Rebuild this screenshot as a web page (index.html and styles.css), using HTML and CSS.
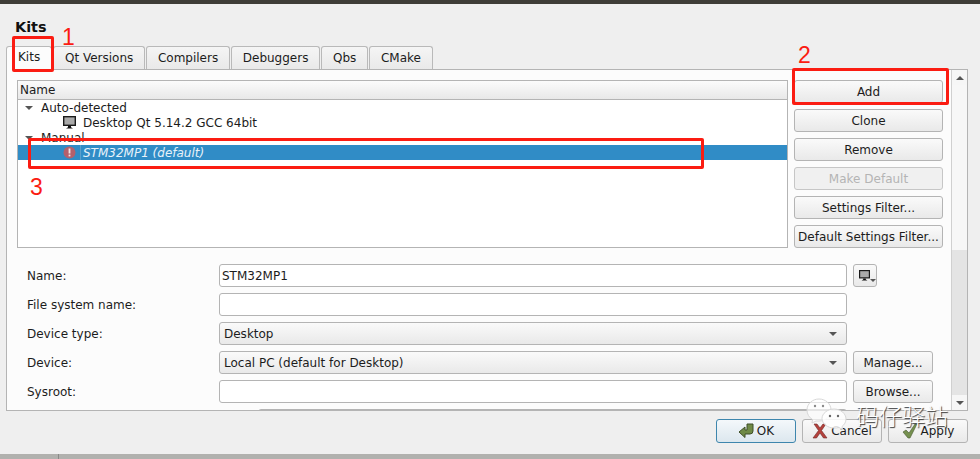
FILE: index.html
```html
<!DOCTYPE html>
<html lang="en">
  <head>
    <meta charset="UTF-8" />
    <title>Kits</title>
    <link rel="stylesheet" href="styles.css">
  </head>
  <body>
    <svg class="icon-defs" width="0" height="0">
      <symbol id="monitor" viewBox="0 0 13 13">
        <rect x="0.7" y="0.7" width="11.600" height="8.600" fill="#aaa" stroke="#1a1a1a" stroke-width="1.400"/>
        <path d="M5 10h3v1.200l2 1.300H3l2-1.300z" fill="#111"/>
      </symbol>
    </svg>
    <div class="topbar"></div>
    <div class="dialog">
      <h1>Kits</h1>
      <div class="tabs">
        <div class="tab active">Kits</div>
        <div class="tab">Qt Versions</div>
        <div class="tab">Compilers</div>
        <div class="tab">Debuggers</div>
        <div class="tab">Qbs</div>
        <div class="tab">CMake</div>
      </div>
      <div class="panel">
        <div class="panel-body">
          <div class="kit-area">
            <div class="tree">
              <div class="tree-header">Name</div>
              <div class="tree-row group"><span class="caret"></span>Auto-detected</div>
              <div class="tree-row kit">
                <svg class="kit-icon"><use href="#monitor"/></svg>Desktop Qt 5.14.2 GCC 64bit
              </div>
              <div class="tree-row group"><span class="caret"></span>Manual</div>
              <div class="tree-row kit selected">
                <svg class="kit-icon" viewBox="0 0 13 13">
                  <circle cx="6.500" cy="6.500" r="6" fill="#b4606c"/>
                  <rect x="5.600" y="2.500" width="1.800" height="5" fill="#f3e6e8"/>
                  <rect x="5.600" y="8.600" width="1.800" height="1.800" fill="#f3e6e8"/>
                </svg><em class="kit-name">STM32MP1 (default)</em>
              </div>
            </div>
            <div class="side-buttons">
              <button>Add</button>
              <button>Clone</button>
              <button>Remove</button>
              <button class="disabled">Make Default</button>
              <button>Settings Filter...</button>
              <button>Default Settings Filter...</button>
            </div>
          </div>
          <div class="form">
            <label>Name:</label>
            <div class="field input">STM32MP1</div>
            <button class="icon-button">
              <svg class="monitor-big"><use href="#monitor"/></svg><span class="mini-caret"></span>
            </button>
            <label>File system name:</label>
            <div class="field input"></div>
            <div></div>
            <label>Device type:</label>
            <div class="field combo">Desktop<span class="caret"></span></div>
            <div></div>
            <label>Device:</label>
            <div class="field combo">Local PC (default for Desktop)<span class="caret"></span></div>
            <button class="small">Manage...</button>
            <label>Sysroot:</label>
            <div class="field input"></div>
            <button class="small">Browse...</button>
            <div></div>
            <div class="field input next-field"></div>
          </div>
        </div>
        <div class="scrollbar">
          <div class="arrow"><span class="arrow-up"></span></div>
          <div class="track"><div class="thumb"></div></div>
          <div class="arrow"><span class="caret"></span></div>
        </div>
      </div>
      <div class="dialog-buttons">
        <button class="default">
          <svg class="btn-icon" viewBox="0 0 16 16"><path d="M9 1h6v7q0 3-3 3H7v3.500L1 9l6-5v3h2z" fill="#6f8a46" stroke="#3f4f28"/></svg>OK
        </button>
        <button>
          <svg class="btn-icon" viewBox="0 0 16 16"><path d="M2 1h3l3 4 3-4h3l-4.500 6.500L15 15h-3.500L8 10l-3.500 5H1l5.500-7.500z" fill="#b5413c" stroke="#6e2a28" stroke-width=".6"/></svg>Cancel
        </button>
        <button>
          <svg class="btn-icon" viewBox="0 0 16 16"><path d="M1 9l3-2 3 3 6-9h2L8 15H6z" fill="#75904f" stroke="#46582f" stroke-width=".6"/></svg>Apply
        </button>
      </div>
    </div>
    <div class="taskbar"><span class="taskbar-cell"></span></div>

    <!-- red annotations drawn over the screenshot -->
    <div class="mark mark-tab"></div>
    <div class="mark mark-add"></div>
    <div class="mark mark-row"></div>
    <span class="num num-1">1</span>
    <span class="num num-2">2</span>
    <span class="num num-3">3</span>

    <div class="watermark">
      <svg class="wechat" viewBox="0 0 42 33">
        <path d="M13 1c6.500 0 12 4.700 12 11 0 6-5.500 11-12 11l-3 0-4 2 .5-3.500C3 19.500 1 16 1 12 1 5.700 6.500 1 13 1z" fill="#fff" fill-opacity=".65" stroke="#d8d8d8"/>
        <path d="M28 11c6.500 0 12 4.500 12 10 0 3-1.500 5.500-4 7.500l.5 3-3.500-2c-1.500.4-3.300.5-5 .5-6.500 0-12-4.500-12-9.500S21.500 11 28 11z" fill="#fff" fill-opacity=".85" stroke="#d8d8d8"/>
        <circle cx="9" cy="8" r="1.200" fill="#8a8a8a"/>
        <circle cx="17" cy="8" r="1.200" fill="#8a8a8a"/>
        <circle cx="24" cy="18" r="1.200" fill="#666"/>
        <circle cx="32" cy="18" r="1.200" fill="#666"/>
      </svg>
      <span class="watermark-text">码仔驿站</span>
    </div>
  </body>
</html>
```

FILE: styles.css
```css
html, body {
  margin: 0;
  padding: 0;
}
body {
  position: relative;
  width: 980px;
  height: 459px;
  overflow: hidden;
  display: flex;
  flex-direction: column;
  font-family: "DejaVu Sans", sans-serif;
  font-size: 12px;
  color: #1c1c1c;
  background: #efefef;
}
.icon-defs {
  position: absolute;
}
.topbar {
  height: 4px;
  background: #3e3d37;
}
.dialog {
  flex: 1;
  padding: 0 12px 0 6px;
  display: flex;
  flex-direction: column;
}
h1 {
  margin: 15px 0 0 9px;
  font-size: 14.400px;
  line-height: 17px;
  font-weight: bold;
  color: #111;
}
.tabs {
  display: flex;
  margin: 10px 0 0 1px;
  height: 24px;
}
.tab {
  padding: 3px 10.800px 0;
  margin-right: 1px;
  height: 23px;
  box-sizing: border-box;
  border: 1px solid #b9b9b9;
  border-bottom: none;
  border-radius: 3px 3px 0 0;
  background: linear-gradient(#f5f5f5, #e9e9e9);
  line-height: 16px;
}
.tab.active {
  background: #fcfcfc;
  height: 24px;
  margin-left: -1px;
  padding: 2px 11px;
  position: relative;
  z-index: 1;
}
.panel {
  display: flex;
  height: 342px;
  margin-top: -1px;
  box-sizing: border-box;
  border: 1px solid #b4b4b4;
  background: #fcfcfc;
}
.panel-body {
  flex: 1;
  padding: 10px 8px 0 10px;
  overflow: hidden;
}
.kit-area {
  display: flex;
  gap: 6px;
}
.tree {
  width: 771px;
  height: 168px;
  box-sizing: border-box;
  border: 1px solid #b4b4b4;
  background: #fff;
}
.tree-header {
  height: 18px;
  padding-left: 2px;
  line-height: 18px;
  background: linear-gradient(#fbfbfb, #e8e8e8);
  border-bottom: 1px solid #b4b4b4;
}
.tree-row {
  height: 15px;
  line-height: 17px;
  white-space: nowrap;
  display: flex;
  align-items: flex-start;
}
.group {
  padding-left: 7px;
}
.group .caret {
  margin-right: 8px;
  align-self: center;
}
.kit {
  padding-left: 45px;
}
.kit-icon {
  width: 13px;
  height: 13px;
  margin-right: 7px;
  align-self: center;
}
.selected {
  background: #308cc6;
  color: #e8f2f9;
}
.kit-name {
  font-style: italic;
  height: 15px;
  margin-left: -3px;
  padding-left: 2px;
  border-left: 1px solid #5a9fcc;
}
.caret {
  display: inline-block;
  width: 0;
  height: 0;
  border-left: 4px solid transparent;
  border-right: 4px solid transparent;
  border-top: 4px solid #555;
}
.arrow-up {
  display: inline-block;
  width: 0;
  height: 0;
  border-left: 4px solid transparent;
  border-right: 4px solid transparent;
  border-bottom: 4px solid #555;
}
button {
  font-family: inherit;
  font-size: 12px;
  color: #1c1c1c;
  height: 23px;
  padding: 0;
  box-sizing: border-box;
  border: 1px solid #b4b4b4;
  border-radius: 3px;
  background: linear-gradient(#fafafa, #e9e9e9);
}
.side-buttons {
  width: 149px;
  display: flex;
  flex-direction: column;
  gap: 6px;
}
button.disabled {
  color: #b4b4b4;
  background: #f0f0f0;
  border-color: #c6c6c6;
}
.form {
  display: grid;
  grid-template-columns: 186px 628px auto;
  grid-auto-rows: 23px;
  row-gap: 6px;
  column-gap: 6px;
  margin-top: 16px;
  padding-left: 10px;
  align-items: center;
  justify-items: start;
}
.form label {
  padding-top: 2px;
  line-height: 23px;
}
.field {
  width: 100%;
  height: 23px;
  box-sizing: border-box;
  border: 1px solid #b4b4b4;
  border-radius: 3px;
  line-height: 23px;
  padding-left: 2px;
  background: #fff;
  overflow: hidden;
}
.combo {
  display: flex;
  align-items: flex-start;
  justify-content: space-between;
  padding: 0 9px 0 4px;
  background: linear-gradient(#fafafa, #e9e9e9);
}
.combo .caret {
  align-self: center;
}
.next-field {
  margin-left: 39px;
  width: calc(100% - 39px);
}
.icon-button {
  width: 24px;
  display: flex;
  align-items: center;
  padding: 0 0 0 5px;
}
.monitor-big {
  width: 13px;
  height: 13px;
}
.mini-caret {
  width: 0;
  height: 0;
  margin: 9px 0 0 0;
  border-left: 3px solid transparent;
  border-right: 3px solid transparent;
  border-top: 3px solid #555;
}
.small {
  width: 80px;
}
.scrollbar {
  width: 15px;
  display: flex;
  flex-direction: column;
  background: #e4e4e4;
  border-left: 1px solid #d0d0d0;
}
.arrow {
  height: 15px;
  display: flex;
  align-items: center;
  justify-content: center;
  background: #f6f6f6;
}
.track {
  flex: 1;
  min-height: 0;
}
.thumb {
  height: 165px;
  background: #f7f7f7;
}
.dialog-buttons {
  display: flex;
  justify-content: flex-end;
  gap: 6px;
  margin: 8px 0 0;
}
.dialog-buttons button {
  width: 80px;
  height: 24px;
  display: flex;
  align-items: center;
  justify-content: center;
  gap: 3px;
}
.dialog-buttons .default {
  border-color: #3e86ad;
  background: linear-gradient(#f4f8fb, #dce7ee);
}
.btn-icon {
  width: 16px;
  height: 16px;
}
.taskbar {
  height: 5px;
  background: #b1b1ae;
}
.taskbar-cell {
  display: block;
  width: 59px;
  height: 5px;
  box-sizing: border-box;
  border-right: 1px solid #8a8a88;
}

/* annotations */
.mark {
  position: absolute;
  z-index: 2;
  box-sizing: border-box;
  border: 3px solid #fb1c12;
  border-radius: 2px;
}
.mark-tab {
  left: 12px;
  top: 36px;
  width: 42px;
  height: 36px;
}
.mark-add {
  left: 792px;
  top: 68px;
  width: 157px;
  height: 37px;
}
.mark-row {
  left: 28px;
  top: 138px;
  width: 676px;
  height: 31px;
}
.num {
  position: absolute;
  z-index: 2;
  font-family: "Liberation Sans", sans-serif;
  font-size: 23px;
  line-height: 23px;
  color: #fb1c12;
}
.num-1 {
  left: 62px;
  top: 26px;
}
.num-2 {
  left: 798px;
  top: 44px;
}
.num-3 {
  left: 30px;
  top: 176px;
}
.watermark {
  position: absolute;
  z-index: 2;
  left: 806px;
  top: 398px;
  display: flex;
  align-items: center;
  gap: 8px;
}
.wechat {
  width: 42px;
  height: 33px;
}
.watermark-text {
  font-family: "Noto Sans CJK SC", sans-serif;
  font-size: 23px;
  font-weight: 300;
  line-height: 28px;
  color: #fff;
  text-shadow: 1px 1px 1px #333;
}
```
